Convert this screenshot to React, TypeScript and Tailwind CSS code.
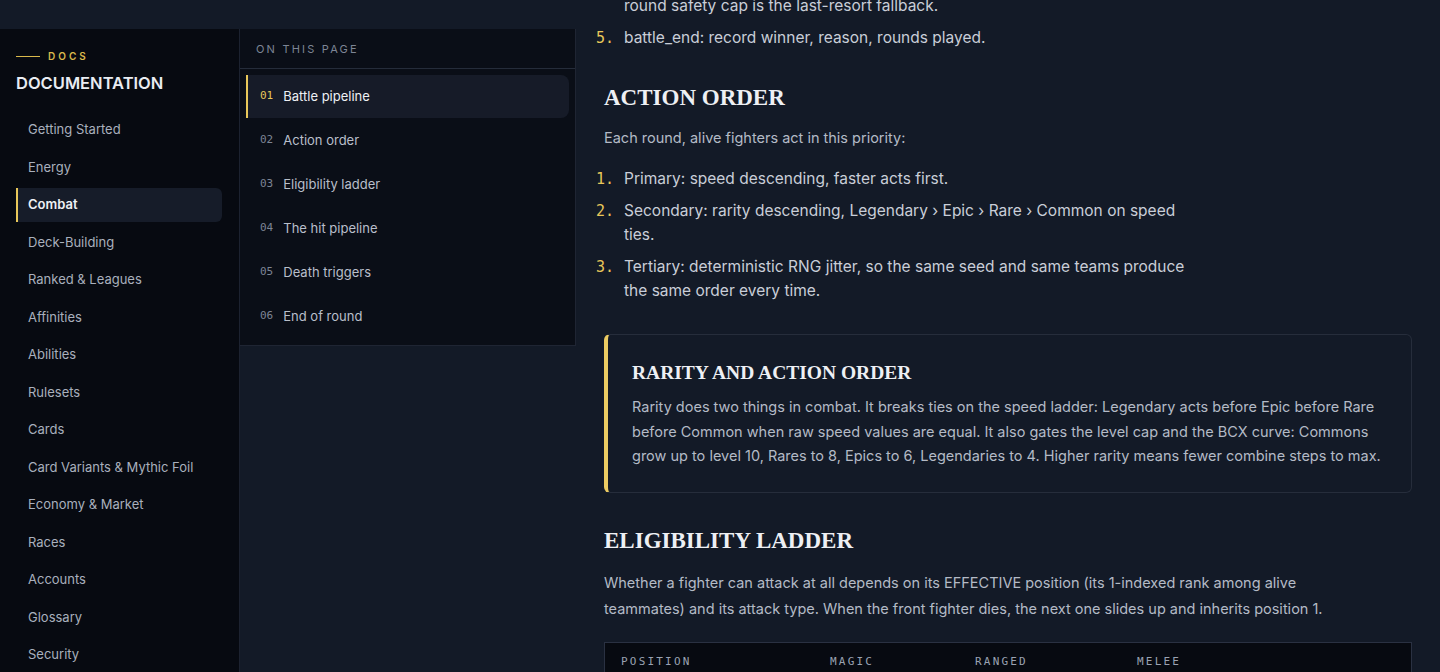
import React from 'react'

const sans = { fontFamily: 'Inter, "Noto Sans", sans-serif' }

const navItems = [
  'Getting Started',
  'Energy',
  'Combat',
  'Deck-Building',
  'Ranked & Leagues',
  'Affinities',
  'Abilities',
  'Rulesets',
  'Cards',
  'Card Variants & Mythic Foil',
  'Economy & Market',
  'Races',
  'Accounts',
  'Glossary',
  'Security',
]

const tocItems = [
  'Battle pipeline',
  'Action order',
  'Eligibility ladder',
  'The hit pipeline',
  'Death triggers',
  'End of round',
]

function Sidebar() {
  return (
    <aside className="mt-[29px] w-[240px] shrink-0 border-r border-[#1c2230] bg-[#070a11] px-4 pt-[20px]">
      <div className="flex items-center gap-2">
        <span className="h-px w-6 bg-[#d9b94c]" />
        <span className="text-[10px] font-semibold tracking-[0.3em] text-[#d9b94c]">DOCS</span>
      </div>
      <h2 className="mt-[7px] text-[16.5px] font-semibold leading-[24px] text-[#e9ecf2]">DOCUMENTATION</h2>
      <nav className="mt-[18px] flex flex-col gap-[3.5px] pr-[1px]">
        {navItems.map((item) => {
          const active = item === 'Combat'
          return (
            <div
              key={item}
              className={
                active
                  ? 'flex h-[34px] items-center rounded-r-md border-l-2 border-[#e8c75a] bg-[#161c29] pl-[10px] text-[13px] font-semibold text-[#eef0f4]'
                  : 'flex h-[34px] items-center pl-3 text-[13px] text-[#a9b0bd]'
              }
            >
              {item}
            </div>
          )
        })}
      </nav>
    </aside>
  )
}

function Toc() {
  return (
    <aside className="mt-[29px] h-[317px] w-[336px] shrink-0 self-start border-r border-b border-[#1f2533] bg-[#0a0e17]">
      <div className="flex h-[40px] items-center border-b border-[#252c3a] px-4 pt-px text-[11px] tracking-[0.2em] text-[#7d8595]">
        ON THIS PAGE
      </div>
      <div className="flex flex-col gap-px px-[6px] pt-[6px]">
        {tocItems.map((item, i) => {
          const active = i === 0
          return (
            <div
              key={item}
              className={
                active
                  ? 'flex h-[43px] items-center gap-[10px] rounded-r-lg border-l-2 border-[#e8c75a] bg-[#161b28] pl-3 text-[13px] text-[#eef0f4]'
                  : 'flex h-[43px] items-center gap-[10px] pl-[14px] text-[13px] text-[#b9bfcb]'
              }
            >
              <span
                className={active ? 'text-[11px] text-[#e8c75a]' : 'text-[11px] text-[#7d8595]'}
                style={{ fontFamily: '"DejaVu Sans Mono", monospace' }}
              >
                {String(i + 1).padStart(2, '0')}
              </span>
              <span>{item}</span>
            </div>
          )
        })}
      </div>
    </aside>
  )
}

function ListItem({ n, children }: { n: number; children: React.ReactNode }) {
  return (
    <li className="flex gap-[10px]">
      <span
        className="w-[18px] shrink-0 text-[15px] text-[#e8c75a]"
        style={{ fontFamily: '"DejaVu Sans Mono", monospace' }}
      >
        {n}.
      </span>
      <span>{children}</span>
    </li>
  )
}

const serif = { fontFamily: '"Liberation Serif", "DejaVu Serif", serif' }

export default function App() {
  return (
    <div className="flex h-[672px] w-[1440px] overflow-hidden bg-[#131a27]" style={sans}>
      <Sidebar />
      <Toc />
      <main className="flex-1 px-[28px]">
        <ol className="-mt-[30px] -ml-[8px] flex max-w-[600px] flex-col gap-[8px] text-[15.5px] leading-[24px] text-[#c9ced8]">
          <ListItem n={4}>
            rounds: loop until one side is wiped out; the 50-
            <br />
            round safety cap is the last-resort fallback.
          </ListItem>
          <ListItem n={5}>battle_end: record winner, reason, rounds played.</ListItem>
        </ol>

        <h2 className="mt-[32px] text-[23px] font-bold leading-[32px] text-[#eef0f4]" style={serif}>
          ACTION ORDER
        </h2>
        <p className="mt-[11px] text-[14.5px] leading-[26px] text-[#b4bac6]">
          Each round, alive fighters act in this priority:
        </p>
        <ol className="mt-[16px] -ml-[8px] flex max-w-[600px] flex-col gap-[8px] text-[15.5px] leading-[24px] text-[#c9ced8]">
          <ListItem n={1}>Primary: speed descending, faster acts first.</ListItem>
          <ListItem n={2}>Secondary: rarity descending, Legendary › Epic › Rare › Common on speed ties.</ListItem>
          <ListItem n={3}>
            Tertiary: deterministic RNG jitter, so the same seed and same teams produce the same order every time.
          </ListItem>
        </ol>

        <div className="mt-[31px] rounded-md border border-l-4 border-[#262d3b] border-l-[#eccb62] bg-[#131a27] pt-[24px] pb-[23px] pl-[24px] pr-6">
          <h3 className="text-[19.5px] font-bold leading-[28px] text-[#eef0f4]" style={serif}>
            RARITY AND ACTION ORDER
          </h3>
          <p className="mt-[8px] text-[14.5px] leading-[24.5px] text-[#b4bac6]">
            Rarity does two things in combat. It breaks ties on the speed ladder: Legendary acts before Epic before Rare
            before Common when raw speed values are equal. It also gates the level cap and the BCX curve: Commons grow
            up to level 10, Rares to 8, Epics to 6, Legendaries to 4. Higher rarity means fewer combine steps to max.
          </p>
        </div>

        <h2 className="mt-[32px] text-[23px] font-bold leading-[32px] text-[#eef0f4]" style={serif}>
          ELIGIBILITY LADDER
        </h2>
        <p className="mt-[13px] max-w-[740px] text-[14.5px] leading-[26px] text-[#b4bac6]">
          Whether a fighter can attack at all depends on its EFFECTIVE position (its 1-indexed rank among alive
          teammates) and its attack type. When the front fighter dies, the next one slides up and inherits position 1.
        </p>

        <div className="mt-[20px] border border-[#2a3142] bg-[#070a11]">
          <div
            className="grid h-[40px] grid-cols-[209px_145px_162px_1fr] items-center px-4 text-[11px] tracking-[0.2em] text-[#9aa2b2]"
            style={{ fontFamily: '"DejaVu Sans Mono", monospace' }}
          >
            <span>POSITION</span>
            <span>MAGIC</span>
            <span>RANGED</span>
            <span>MELEE</span>
          </div>
        </div>
      </main>
    </div>
  )
}
